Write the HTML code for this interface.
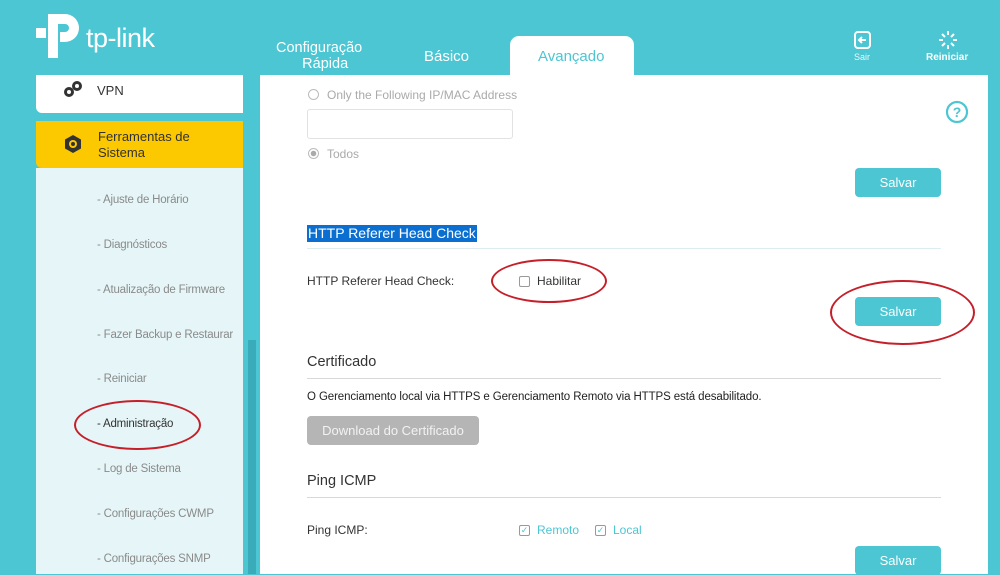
<!DOCTYPE html>
<html><head><meta charset="utf-8"><style>
*{margin:0;padding:0;box-sizing:border-box}
body{width:1000px;height:574px;overflow:hidden;background:#4cc6d3;font-family:"Liberation Sans",sans-serif;position:relative}
.a{position:absolute}
.t{position:absolute;white-space:nowrap}
.btn{position:absolute;background:#4cc6d3;color:#fff;font-size:13px;text-align:center;border-radius:4px;width:86px;height:29px;line-height:29px}
.line{position:absolute;height:1px;background:#d8d8d8}
.sub{position:absolute;left:97px;font-size:11.5px;color:#8a8a8a;letter-spacing:-0.2px}
.oval{position:absolute;border:2.5px solid #c5202a;border-radius:50%}
.cb{position:absolute;width:11px;height:11px;border:1px solid #999;border-radius:2px;background:#fff}
</style></head><body>
<!-- logo -->
<svg class="a" style="left:34px;top:10px" width="50" height="50" viewBox="0 0 50 50"><path d="M14 4h17a14 14 0 0 1 0 28h-5v-10h5a4 4 0 0 0 0-8h-7v34h-10z" fill="#fff"/><rect x="2" y="18" width="10" height="10" fill="#fff"/></svg>
<div class="t" style="left:86px;top:23px;color:#fff;font-size:27px;letter-spacing:-0.5px">tp-link</div>
<!-- tabs -->
<div class="t" style="left:276px;top:40px;color:#fff;font-size:14.5px;text-align:center;line-height:16px">Configuração<br>&nbsp;&nbsp;&nbsp;Rápida</div>
<div class="t" style="left:424px;top:48px;color:#fff;font-size:15px">Básico</div>
<div class="a" style="left:510px;top:36px;width:124px;height:45px;background:#fff;border-radius:9px 9px 0 0"></div>
<div class="t" style="left:538px;top:48px;color:#4cc6d3;font-size:15px">Avançado</div>
<!-- top right -->
<svg class="a" style="left:853px;top:31px" width="20" height="18" viewBox="0 0 20 18"><rect x="2" y="1" width="15" height="16" rx="3" fill="none" stroke="#fff" stroke-width="2"/><path d="M13 9H6M9 6L6 9l3 3" fill="none" stroke="#fff" stroke-width="2"/></svg>
<div class="t" style="left:854px;top:52px;color:#e8f8fa;font-size:9px">Sair</div>
<svg class="a" style="left:937px;top:30px" width="22" height="20" viewBox="-11 -10 22 20" stroke="#fff" stroke-width="2"><path d="M0-9v4M0 5v4M-9 0h4M5 0h4M-6-6l3 3M3 3l3 3M6-6l-3 3M-3 3l-3 3"/></svg>
<div class="t" style="left:926px;top:52px;color:#fff;font-size:10px;font-weight:bold">Reiniciar</div>
<!-- sidebar -->
<div class="a" style="left:36px;top:168px;width:207px;height:406px;background:#e6f6f8"></div>
<div class="a" style="left:36px;top:75px;width:207px;height:38px;background:#fff;border-radius:0 0 0 6px"></div>
<svg class="a" style="left:63px;top:80px" width="20" height="18" viewBox="0 0 20 18"><g fill="none" stroke="#333" stroke-width="3"><circle cx="6" cy="12" r="3.5"/><circle cx="14" cy="6" r="3.5"/></g></svg>
<div class="t" style="left:97px;top:83px;font-size:13px;color:#333">VPN</div>
<div class="a" style="left:36px;top:121px;width:207px;height:47px;background:#fcc800;border-radius:0 0 0 6px"></div>
<svg class="a" style="left:63px;top:134px" width="20" height="20" viewBox="-10 -10 20 20"><polygon points="0,-9 8,-4.5 8,4.5 0,9 -8,4.5 -8,-4.5" fill="#333"/><circle r="4" fill="#fcc800"/><circle r="2" fill="#333"/></svg>
<div class="t" style="left:98px;top:129px;font-size:13px;color:#333;line-height:16px">Ferramentas de<br>Sistema</div>
<div class="sub" style="top:194px">- Ajuste de Horário</div>
<div class="sub" style="top:239px">- Diagnósticos</div>
<div class="sub" style="top:284px">- Atualização de Firmware</div>
<div class="sub" style="top:329px">- Fazer Backup e Restaurar</div>
<div class="sub" style="top:373px">- Reiniciar</div>
<div class="sub" style="top:418px;color:#333">- Administração</div>
<div class="sub" style="top:463px">- Log de Sistema</div>
<div class="sub" style="top:508px">- Configurações CWMP</div>
<div class="sub" style="top:553px">- Configurações SNMP</div>
<div class="oval" style="left:74px;top:400px;width:127px;height:50px"></div>
<div class="a" style="left:248px;top:340px;width:8px;height:234px;background:#3aabb8"></div>
<!-- main -->
<div class="a" style="left:260px;top:75px;width:728px;height:499px;background:#fff"></div>
<div class="a" style="left:308px;top:89px;width:11px;height:11px;border:1px solid #bbb;border-radius:50%"></div>
<div class="t" style="left:327px;top:88px;font-size:12px;color:#aaa">Only the Following IP/MAC Address</div>
<div class="a" style="left:307px;top:109px;width:206px;height:30px;border:1px solid #e2e2e2;border-radius:3px"></div>
<div class="a" style="left:308px;top:148px;width:11px;height:11px;border:1px solid #bbb;border-radius:50%;background:radial-gradient(#aaa 0 2.5px,#fff 3px)"></div>
<div class="t" style="left:327px;top:147px;font-size:12px;color:#aaa">Todos</div>
<svg class="a" style="left:945px;top:100px" width="24" height="24" viewBox="0 0 24 24"><circle cx="12" cy="12" r="10" fill="none" stroke="#4cc6d3" stroke-width="2.2"/><text x="12" y="17" font-size="14" font-weight="bold" text-anchor="middle" fill="#4cc6d3" font-family="Liberation Sans">?</text></svg>
<div class="btn" style="left:855px;top:168px">Salvar</div>
<div class="t" style="left:307px;top:225px;font-size:14px;color:#fff;background:#0a6fd0;padding:0 1px;line-height:17px">HTTP Referer Head Check</div>
<div class="line" style="left:307px;top:248px;width:634px;background:#dcecef"></div>
<div class="t" style="left:307px;top:274px;font-size:12px;color:#333">HTTP Referer Head Check:</div>
<div class="cb" style="left:519px;top:276px"></div>
<div class="t" style="left:537px;top:274px;font-size:12px;color:#333">Habilitar</div>
<div class="oval" style="left:491px;top:259px;width:116px;height:44px"></div>
<div class="btn" style="left:855px;top:297px">Salvar</div>
<div class="oval" style="left:830px;top:280px;width:145px;height:65px"></div>
<div class="t" style="left:307px;top:354px;font-size:14.5px;color:#333">Certificado</div>
<div class="line" style="left:307px;top:378px;width:634px"></div>
<div class="t" style="left:307px;top:391px;font-size:11.5px;color:#222;letter-spacing:-0.1px">O Gerenciamento local via HTTPS e Gerenciamento Remoto via HTTPS está desabilitado.</div>
<div class="a" style="left:307px;top:416px;width:172px;height:29px;background:#b5b5b5;border-radius:4px;color:#f2f2f2;font-size:13px;text-align:center;line-height:29px">Download do Certificado</div>
<div class="t" style="left:307px;top:473px;font-size:14.5px;color:#333">Ping ICMP</div>
<div class="line" style="left:307px;top:497px;width:634px"></div>
<div class="t" style="left:307px;top:523px;font-size:12px;color:#333">Ping ICMP:</div>
<div class="cb" style="left:519px;top:525px;color:#4cc6d3;font-size:9px;line-height:9px;text-align:center">✓</div>
<div class="t" style="left:537px;top:523px;font-size:12px;color:#4cc6d3">Remoto</div>
<div class="cb" style="left:595px;top:525px;color:#4cc6d3;font-size:9px;line-height:9px;text-align:center">✓</div>
<div class="t" style="left:613px;top:523px;font-size:12px;color:#4cc6d3">Local</div>
<div class="btn" style="left:855px;top:546px">Salvar</div>
</body></html>
